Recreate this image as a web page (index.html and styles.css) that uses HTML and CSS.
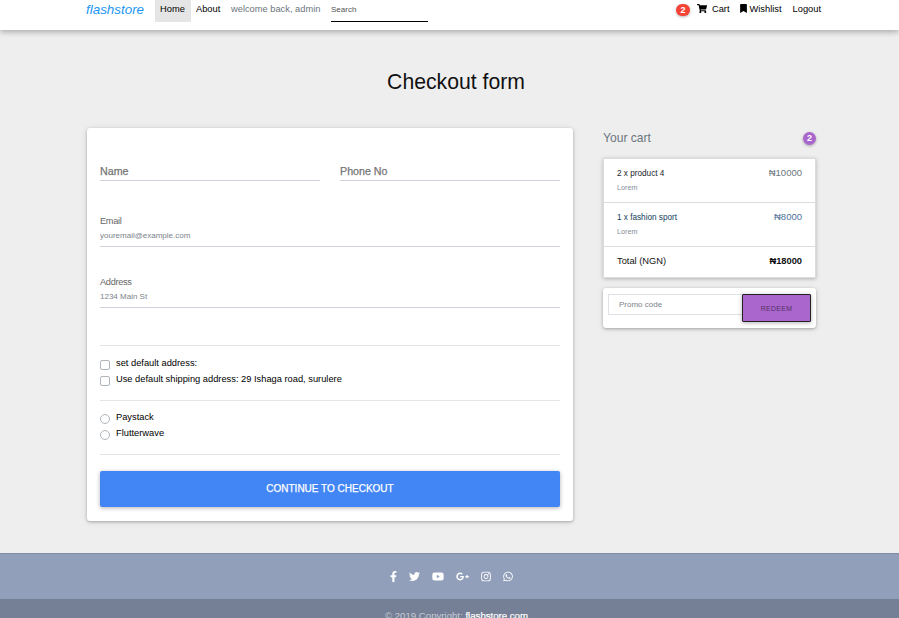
FILE: index.html
```html
<!DOCTYPE html>
<html lang="en">
<head>
<meta charset="utf-8">
<title>Checkout form</title>
<link rel="stylesheet" href="styles.css">
</head>
<body>
<nav class="navbar">
  <a class="brand">flashstore</a>
  <a class="nav-link active">Home</a>
  <a class="nav-link about">About</a>
  <span class="nav-link welcome">welcome back, admin</span>
  <input class="search" placeholder="Search">
  <div class="nav-right">
    <span class="badge red">2</span>
    <svg class="cart-icon" viewBox="0 0 576 512"><path d="M528.12 301.319l47.273-208C578.806 78.301 567.391 64 551.99 64H159.208l-9.166-44.81C147.758 8.021 137.93 0 126.529 0H24C10.745 0 0 10.745 0 24v16c0 13.255 10.745 24 24 24h69.883l70.248 343.435C147.325 417.1 136 435.222 136 456c0 30.928 25.072 56 56 56s56-25.072 56-56c0-15.674-6.447-29.835-16.824-40h209.647C430.447 426.165 424 440.326 424 456c0 30.928 25.072 56 56 56s56-25.072 56-56c0-22.172-12.888-41.332-31.579-50.405l5.517-24.276c3.413-15.018-8.002-29.319-23.403-29.319H218.117l-6.545-32h293.145c11.206 0 20.92-7.754 23.403-18.681z"/></svg>
    <a class="cart">Cart</a>
    <svg class="mark-icon" viewBox="0 0 384 512"><path d="M0 512V48C0 21.49 21.49 0 48 0h288c26.51 0 48 21.49 48 48v464L192 400 0 512z"/></svg>
    <a class="wishlist">Wishlist</a>
    <a>Logout</a>
  </div>
</nav>
<main class="container">
  <h2>Checkout form</h2>
  <div class="columns">
    <form class="card form-card">
      <div class="names">
        <label class="big-field">Name</label>
        <label class="big-field">Phone No</label>
      </div>
      <div class="field email"><label>Email</label><input placeholder="youremail@example.com"></div>
      <div class="field address"><label>Address</label><input placeholder="1234 Main St"></div>
      <div class="choices shipping">
        <label><i class="box"></i><span>set default address:</span></label>
        <label><i class="box"></i><span>Use default shipping address: 29 Ishaga road, surulere</span></label>
      </div>
      <div class="choices payment">
        <label><i class="box round"></i><span>Paystack</span></label>
        <label><i class="box round"></i><span>Flutterwave</span></label>
      </div>
      <div class="submit"><button type="button">CONTINUE TO CHECKOUT</button></div>
    </form>
    <aside>
      <h4><span>Your cart</span><span class="badge purple">2</span></h4>
      <ul class="cart-list">
        <li><div><h6>2 x product 4</h6><small>Lorem</small></div><span class="price">₦10000</span></li>
        <li><div><h6 class="navy">1 x fashion sport</h6><small>Lorem</small></div><span class="price blue">₦8000</span></li>
        <li class="total"><span>Total (NGN)</span><strong>₦18000</strong></li>
      </ul>
      <div class="card promo"><input placeholder="Promo code"><button type="button">REDEEM</button></div>
    </aside>
  </div>
</main>
<footer>
  <div class="social">
    <svg style="--w:7px" viewBox="0 0 320 512"><path d="M279.14 288l14.22-92.66h-88.91v-60.13c0-25.35 12.42-50.06 52.24-50.06h40.42V6.26S260.43 0 225.36 0c-73.22 0-121.08 44.38-121.08 124.72v70.62H22.89V288h81.39v224h100.17V288z"/></svg>
    <svg style="--w:11px" viewBox="0 0 512 512"><path d="M459.37 151.716c.325 4.548.325 9.097.325 13.645 0 138.72-105.583 298.558-298.558 298.558-59.452 0-114.68-17.219-161.137-47.106 8.447.974 16.568 1.299 25.34 1.299 49.055 0 94.213-16.568 130.274-44.832-46.132-.975-84.792-31.188-98.112-72.772 6.498.974 12.995 1.624 19.818 1.624 9.421 0 18.843-1.3 27.614-3.573-48.081-9.747-84.143-51.98-84.143-102.985v-1.299c13.969 7.797 30.214 12.67 47.431 13.319-28.264-18.843-46.781-51.005-46.781-87.391 0-19.492 5.197-37.36 14.294-52.954 51.655 63.675 129.3 105.258 216.365 109.807-1.624-7.797-2.599-15.918-2.599-24.04 0-57.828 46.782-104.934 104.934-104.934 30.213 0 57.502 12.67 76.67 33.137 23.715-4.548 46.456-13.32 66.599-25.34-7.798 24.366-24.366 44.833-46.132 57.827 21.117-2.273 41.584-8.122 60.426-16.243-14.292 20.791-32.161 39.308-52.628 54.253z"/></svg>
    <svg style="--w:12px" viewBox="0 0 576 512"><path d="M549.655 124.083c-6.281-23.65-24.787-42.276-48.284-48.597C458.781 64 288 64 288 64S117.22 64 74.629 75.486c-23.497 6.322-42.003 24.947-48.284 48.597-11.412 42.867-11.412 132.305-11.412 132.305s0 89.438 11.412 132.305c6.281 23.65 24.787 41.5 48.284 47.821C117.22 448 288 448 288 448s170.78 0 213.371-11.486c23.497-6.321 42.003-24.171 48.284-47.821 11.412-42.867 11.412-132.305 11.412-132.305s0-89.438-11.412-132.305zM232.145 337.591V175.185l142.739 81.205-142.739 81.201z"/></svg>
    <svg style="--w:13px" viewBox="0 0 640 512"><path d="M386.061 228.496c1.834 9.692 3.143 19.384 3.143 31.956C389.204 370.205 315.599 448 204.8 448c-106.084 0-192-85.915-192-192s85.916-192 192-192c51.864 0 95.083 18.859 128.611 50.292l-52.126 50.03c-14.145-13.621-39.028-29.599-76.485-29.599-65.484 0-118.92 54.221-118.92 121.277 0 67.056 53.436 121.277 118.92 121.277 75.961 0 104.513-54.745 108.965-82.773H204.8v-66.009h181.261zm185.406 6.437V179.2h-56.001v55.733h-55.733v56.001h55.733v55.733h56.001v-55.733H627.2v-56.001h-55.733z"/></svg>
    <svg style="--w:10px" viewBox="0 0 448 512"><path fill-rule="evenodd" d="M132 32h184a132 132 0 0 1 132 132v184a132 132 0 0 1-132 132H132A132 132 0 0 1 0 348V164A132 132 0 0 1 132 32zm5 40a96 96 0 0 0-96 96v176a96 96 0 0 0 96 96h174a96 96 0 0 0 96-96V168a96 96 0 0 0-96-96zM224 141a115 115 0 1 0 0 230 115 115 0 0 0 0-230zm0 40a75 75 0 1 1 0 150 75 75 0 0 1 0-150zM344 110a26 26 0 1 0 0 52 26 26 0 0 0 0-52z"/></svg>
    <svg style="--w:10px" viewBox="0 0 448 512"><path d="M380.9 97.1C339 55.1 283.2 32 223.9 32c-122.4 0-222 99.6-222 222 0 39.1 10.2 77.3 29.6 111L0 480l117.7-30.9c32.4 17.7 68.9 27 106.1 27h.1c122.3 0 224.1-99.6 224.1-222 0-59.3-25.2-115-67.1-157zm-157 341.6c-33.2 0-65.7-8.9-94-25.7l-6.7-4-69.8 18.3L72 359.2l-4.4-7c-18.5-29.4-28.2-63.3-28.2-98.2 0-101.7 82.8-184.5 184.6-184.5 49.3 0 95.6 19.2 130.4 54.1 34.8 34.9 56.2 81.2 56.1 130.5 0 101.8-84.9 184.6-186.6 184.6zm101.2-138.2c-5.5-2.8-32.8-16.2-37.9-18-5.1-1.9-8.8-2.8-12.5 2.8-3.7 5.6-14.3 18-17.6 21.8-3.2 3.7-6.5 4.2-12 1.4-32.6-16.3-54-29.1-75.5-66-5.7-9.8 5.7-9.1 16.3-30.3 1.8-3.7.9-6.9-.5-9.7-1.4-2.8-12.5-30.1-17.1-41.2-4.5-10.8-9.1-9.3-12.5-9.5-3.2-.2-6.9-.2-10.6-.2-3.7 0-9.7 1.4-14.8 6.9-5.1 5.6-19.4 19-19.4 46.3 0 27.3 19.9 53.7 22.6 57.4 2.8 3.7 39.1 59.7 94.8 83.8 35.2 15.2 49 16.5 66.6 13.9 10.7-1.6 32.8-13.4 37.4-26.4 4.6-13 4.6-24.1 3.2-26.4-1.3-2.5-5-3.9-10.5-6.6z"/></svg>
  </div>
  <div class="copyright">© 2019 Copyright: <a>flashstore.com</a></div>
</footer>
</body>
</html>
```
FILE: styles.css
```css
* { box-sizing: border-box; }
html { overflow: hidden; }
body {
  margin: 0;
  height: 618px;
  overflow: hidden;
  display: flex;
  flex-direction: column;
  background: #eee;
  font-family: "Liberation Sans", Arial, sans-serif;
  font-size: 9.3px;
  color: #212529;
}
h2, h4, h6, ul { margin: 0; padding: 0; font-weight: 400; }
input, button { font-family: inherit; border: 0; outline: 0; padding: 0; border-radius: 0; background: none; }
input { min-width: 0; }

.navbar {
  flex: none;
  display: flex;
  align-items: flex-start;
  height: 30px;
  padding: 0 78px 0 86px;
  background: #fff;
  box-shadow: 0 2px 5px rgba(0, 0, 0, .2), 0 2px 8px rgba(0, 0, 0, .1);
  color: #000;
  line-height: 18px;
  white-space: nowrap;
}
.brand { width: 69px; font-size: 13.4px; font-style: italic; color: #2196f3; line-height: 19px; }
.nav-link { height: 22px; padding-left: 5px; }
.active { width: 36px; background: #e5e5e5; }
.about { width: 35px; }
.welcome { width: 105px; color: #6c757d; }
.search { width: 97px; height: 22px; border-bottom: 1px solid #000; padding-bottom: 2px; font-size: 8px; }
.search::placeholder { color: #555; }
.nav-right { display: flex; margin-left: auto; }
.badge {
  width: 14px;
  height: 12px;
  margin-top: 4px;
  border-radius: 6px;
  color: #fff;
  font-size: 9px;
  font-weight: 700;
  line-height: 12px;
  text-align: center;
  box-shadow: 0 1px 3px rgba(0, 0, 0, .3);
}
.red { background: #f44336; }
.cart-icon { width: 10px; height: 9px; margin: 4px 5px 0 7px; }
.cart { margin-right: 10px; }
.mark-icon { width: 7px; height: 9px; margin: 4px 3px 0 0; }
.wishlist { margin-right: 11px; }

.container { flex: none; height: 523px; padding: 36px 83px 0 87px; }
h2 { margin-right: -9px; font-size: 21.2px; line-height: 32px; text-align: center; color: #111; }
.columns { display: flex; align-items: flex-start; justify-content: space-between; margin-top: 30px; }
.card { background: #fff; border-radius: 3px; box-shadow: 0 1px 3px rgba(0, 0, 0, .25), 0 1px 6px rgba(0, 0, 0, .1); }
.form-card { width: 486px; height: 393px; padding: 33px 13px 0; }
.names { display: flex; gap: 20px; }
.big-field { flex: 1; height: 20px; border-bottom: 1px solid #ced4da; font-size: 10.7px; line-height: 20px; color: #757575; -webkit-text-stroke: .25px #757575; }
.field { display: flex; flex-direction: column; border-bottom: 1px solid #ced4da; }
.field label { padding-top: 1px; line-height: 12px; font-size: 9.2px; letter-spacing: -.3px; color: #666; }
.field input { height: 12px; margin-top: 2px; font-size: 8px; }
.field input::placeholder, .promo input::placeholder { color: #7b838b; opacity: 1; }
.email { height: 33px; margin-top: 33px; }
.address { height: 33px; margin-top: 28px; }
.choices { border-top: 1px solid #e5e5e5; padding-top: 9px; color: #000; }
.choices label { display: flex; height: 16px; line-height: 16px; }
.shipping { height: 55px; margin-top: 37px; }
.payment { height: 54px; padding-top: 8px; }
.box { width: 10px; height: 10px; margin: 5px 6px 0 0; border: 1px solid #adb5bd; border-radius: 2px; }
.round { border-radius: 50%; }
.submit { border-top: 1px solid #e5e5e5; padding-top: 16px; }
.submit button {
  display: block;
  width: 100%;
  height: 36px;
  padding-bottom: 1px;
  border-radius: 2px;
  background: #4285f4;
  color: #fff;
  font-size: 10px;
  -webkit-text-stroke: .25px #fff;
  box-shadow: 0 1px 4px rgba(0, 0, 0, .3);
}
aside { width: 213px; }
h4 { display: flex; justify-content: space-between; height: 30px; font-size: 12.1px; line-height: 20px; color: #6c757d; }
.purple { background: #a6c; width: 13px; height: 13px; border-radius: 7px; }
.cart-list { height: 120px; list-style: none; background: #fff; border: 1px solid #dcdcdc; box-shadow: 0 1px 4px rgba(0, 0, 0, .25); }
.cart-list li { display: flex; justify-content: space-between; height: 44px; padding: 7px 13px 0; border-bottom: 1px solid #dcdcdc; line-height: 14px; }
.cart-list .total { height: 29px; border: 0; color: #111; }
h6 { font-size: 8.2px; line-height: 15px; }
.navy { color: #123c5c; }
small { display: block; font-size: 7.2px; line-height: 13px; color: #868e96; }
.price { font-size: 9.5px; color: #6c757d; }
.blue { color: #4f7399; }
.promo { display: flex; align-items: flex-start; height: 40px; margin-top: 10px; padding: 6px 5px; }
.promo input { flex: 1; height: 21px; padding-left: 10px; border: 1px solid #dee2e6; border-right: 0; font-size: 8px; }
.promo button { width: 69px; height: 28px; background: #a6c; border: 1px solid #222; border-radius: 1px; font-size: 7px; letter-spacing: .3px; color: #553366; box-shadow: 0 1px 4px rgba(0, 0, 0, .3); }

footer { flex: none; height: 80px; background: #929fba; border-top: 1px solid #7f8ca3; color: #fff; }
.social { display: flex; align-items: center; justify-content: center; height: 45px; gap: 12px; padding: 0 0 1px 4px; }
.social svg { width: var(--w); height: 11px; fill: #fff; }
.copyright { height: 34px; padding: 9px 0 0 14px; background: #757f95; color: #c8ccd5; font-size: 9.65px; line-height: 16px; text-align: center; }
.copyright a { color: #fff; -webkit-text-stroke: .2px #fff; }
```
